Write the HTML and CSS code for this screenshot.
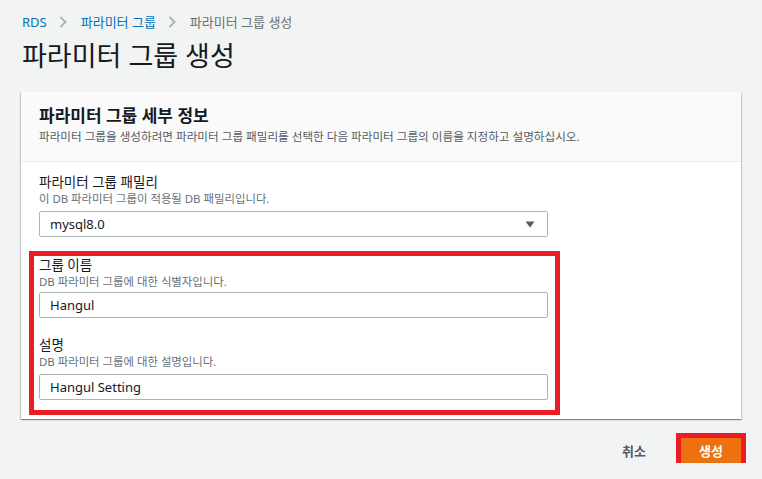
FILE: index.html
```html
<!DOCTYPE html>
<html lang="ko">
<head>
<meta charset="utf-8">
<title>파라미터 그룹 생성</title>
<link rel="stylesheet" href="styles.css">
</head>
<body>
<div class="page">
  <nav class="crumbs">
    <a class="crumb-link" href="#">RDS</a>
    <svg class="chev" width="8" height="12" viewBox="0 0 8 12"><path d="M1.5 1 L6.5 6 L1.5 11" fill="none" stroke="#aab7b8" stroke-width="2"/></svg>
    <a class="crumb-link" href="#">파라미터 그룹</a>
    <svg class="chev" width="8" height="12" viewBox="0 0 8 12"><path d="M1.5 1 L6.5 6 L1.5 11" fill="none" stroke="#aab7b8" stroke-width="2"/></svg>
    <span class="crumb-current">파라미터 그룹 생성</span>
  </nav>
  <h1 class="title">파라미터 그룹 생성</h1>

  <section class="card">
    <header class="card-head">
      <h2 class="card-title">파라미터 그룹 세부 정보</h2>
      <p class="card-desc">파라미터 그룹을 생성하려면 파라미터 그룹 패밀리를 선택한 다음 파라미터 그룹의 이름을 지정하고 설명하십시오.</p>
    </header>
    <div class="card-body">
      <div class="field">
        <div class="label">파라미터 그룹 패밀리</div>
        <div class="hint">이 DB 파라미터 그룹이 적용될 DB 패밀리입니다.</div>
        <div class="select">
          <span>mysql8.0</span>
          <svg class="caret" width="10" height="7" viewBox="0 0 10 7"><path d="M0.5 0.5 H9.5 L5 6.5 Z" fill="#545b64"/></svg>
        </div>
      </div>

      <div class="highlight">
        <div class="label">그룹 이름</div>
        <div class="hint">DB 파라미터 그룹에 대한 식별자입니다.</div>
        <div class="input first">Hangul</div>
        <div class="label second">설명</div>
        <div class="hint">DB 파라미터 그룹에 대한 설명입니다.</div>
        <div class="input last">Hangul Setting</div>
      </div>
    </div>
  </section>

  <div class="actions">
    <button class="btn-cancel" type="button">취소</button>
    <button class="btn-primary" type="button">생성</button>
  </div>
</div>
</body>
</html>
```

FILE: styles.css
```css
html, body {
  margin: 0;
  padding: 0;
  background: #f2f3f3;
}
body {
  font-family: "Noto Sans", "Noto Sans CJK KR", sans-serif;
  color: #16191f;
}
.page {
  padding: 14px 21px 0 21px;
}
.crumbs {
  display: flex;
  align-items: center;
  height: 16px;
  font-size: 13px;
  line-height: 16px;
  padding-left: 1px;
}
.crumb-link {
  color: #0073bb;
  text-decoration: none;
}
.chev {
  margin: 0 14px 0 12px;
}
.crumb-current {
  color: #687078;
}
.title {
  margin: 9px 0 0 1px;
  font-size: 27px;
  line-height: 34px;
  font-weight: 400;
  color: #16191f;
}
.card {
  margin-top: 19px;
  width: 720px;
  background: #fff;
  box-shadow: 0 1px 1px 0 rgba(0,28,36,0.3), 1px 1px 1px 0 rgba(0,28,36,0.15), -1px 1px 1px 0 rgba(0,28,36,0.15);
}
.card-head {
  background: #fafafa;
  border-bottom: 1px solid #eaeded;
  padding: 13px 18px 16px 18px;
}
.card-title {
  margin: 0;
  font-size: 17px;
  line-height: 22px;
  font-weight: 700;
}
.card-desc {
  margin: 2px 0 0 0;
  font-size: 11.6px;
  line-height: 16px;
  color: #545b64;
}
.card-body {
  padding: 11px 18px 4px 18px;
}
.label {
  font-size: 13.5px;
  line-height: 18px;
}
.hint {
  font-size: 11.4px;
  line-height: 14px;
  color: #687078;
  margin-top: 1px;
}
.select, .input {
  box-sizing: border-box;
  width: 509px;
  height: 26px;
  border: 1px solid #aab7b8;
  border-radius: 2px;
  background: #fff;
  font-size: 13px;
  line-height: 24px;
  padding: 0 10px;
}
.select {
  margin-top: 5px;
  display: flex;
  align-items: center;
  justify-content: space-between;
  padding-right: 12px;
}
.highlight {
  box-sizing: border-box;
  width: 531px;
  margin: 14px 0 0 -10px;
  border: 5px solid #ed1c24;
  padding: 0 7px 10px 5px;
}
.input.first {
  margin-top: 3px;
}
.label.second {
  margin-top: 18px;
}
.input.last {
  margin-top: 5px;
}
.actions {
  width: 720px;
  display: flex;
  justify-content: flex-end;
  align-items: center;
  gap: 35px;
  margin-top: 19px;
}
.btn-cancel {
  border: 0;
  background: transparent;
  padding: 0;
  font-family: inherit;
  font-size: 13px;
  font-weight: 700;
  color: #545b64;
}
.btn-primary {
  width: 60px;
  height: 25px;
  border: 0;
  padding: 0;
  background: #ec7211;
  color: #fff;
  font-family: inherit;
  font-size: 13px;
  font-weight: 700;
  outline: 5px solid #ed1c24;
}
```
